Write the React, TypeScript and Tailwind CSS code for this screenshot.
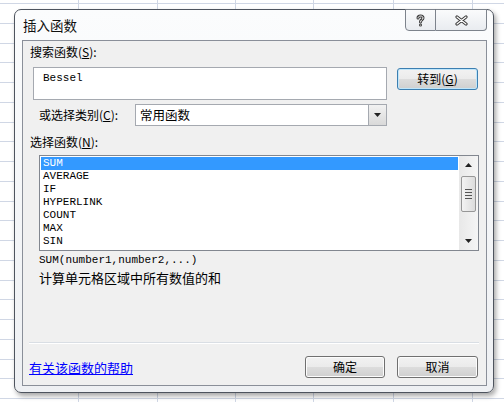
import type { ReactNode } from "react";

const functions = ["SUM", "AVERAGE", "IF", "HYPERLINK", "COUNT", "MAX", "SIN"];

function SheetGrid() {
    const rows = Array.from({ length: 21 }, (_, i) => Math.round(3 + i * 19.75) + 0.5);
    const cols = [78, 157, 235, 313, 393, 472];
    return (
        <svg className="absolute inset-0" width="504" height="402">
            {rows.map((y) => (
                <line key={`r${y}`} x1="0" x2="504" y1={y} y2={y} stroke="#d0d7e5" />
            ))}
            {cols.map((x) => (
                <line key={`c${x}`} x1={x + 0.5} x2={x + 0.5} y1="0" y2="402" stroke="#d0d7e5" />
            ))}
        </svg>
    );
}

function WinButton({
    children,
    className,
}: {
    children: ReactNode;
    className: string;
}) {
    return (
        <div
            className={`flex items-center justify-center rounded-[3px] border bg-[linear-gradient(to_bottom,#f2f2f2_0%,#ebebeb_50%,#dddddd_50%,#cfcfcf_100%)] text-[12px] text-black ${className}`}
        >
            {children}
        </div>
    );
}

function Triangle({ up }: { up?: boolean }) {
    return (
        <svg width="7" height="4" viewBox="0 0 7 4">
            <polygon points={up ? "3.5,0 7,4 0,4" : "0,0 7,0 3.5,4"} fill="#222" />
        </svg>
    );
}

export default function App() {
    return (
        <div className="relative h-[402px] w-[504px] overflow-hidden bg-white pl-[14px] pt-[9px] font-['Noto_Sans_CJK_SC',sans-serif]">
            <SheetGrid />

            {/* Dialog frame */}
            <div className="relative flex h-[384px] w-[480px] flex-col rounded-[7px] border border-[#4e545e] bg-[linear-gradient(to_bottom,#fbfcfd,#eef0f3)] shadow-[2px_3px_5px_rgba(0,0,0,0.35)]">
                {/* Title bar */}
                <div className="flex h-[30px] items-start justify-between pl-[8px] pr-[6px]">
                    <div className="pt-[7px] text-[13.5px] leading-[16px] text-[#111] [text-shadow:0_0_6px_#fff]">
                        插入函数
                    </div>
                    <div className="-mt-px flex h-[22px]">
                        <div className="flex w-[31px] items-center justify-center rounded-bl-[4px] border border-[#7d838c] bg-[linear-gradient(to_bottom,#fafbfc,#e9ecf0)]">
                            <svg width="9" height="13" viewBox="0 0 9 13">
                                <path d="M2 4 C2 1.3 7 1.3 7 4 C7 5.8 4.5 5.8 4.5 8" fill="none" stroke="#3a3a3a" strokeWidth="3" strokeLinecap="round" />
                                <circle cx="4.5" cy="11" r="1.5" fill="#3a3a3a" />
                                <path d="M2 4 C2 1.3 7 1.3 7 4 C7 5.8 4.5 5.8 4.5 8" fill="none" stroke="#fff" strokeWidth="1" strokeLinecap="round" />
                                <circle cx="4.5" cy="11" r="0.5" fill="#fff" />
                            </svg>
                        </div>
                        <div className="flex w-[51px] items-center justify-center rounded-br-[4px] border border-l-0 border-[#7d838c] bg-[linear-gradient(to_bottom,#fafbfc,#e9ecf0)]">
                            <svg width="13" height="11" viewBox="0 0 13 11">
                                <path d="M2 2 L11 9 M11 2 L2 9" stroke="#3a3a3a" strokeWidth="3.2" strokeLinecap="round" />
                                <path d="M2 2 L11 9 M11 2 L2 9" stroke="#fff" strokeWidth="1.2" strokeLinecap="round" />
                            </svg>
                        </div>
                    </div>
                </div>

                {/* Client area */}
                <div className="ml-[7px] h-[346px] w-[465px] border border-[#8a8f99] bg-[#f0f0f0] text-[12px] leading-[16px] text-black">
                    <div className="ml-[7px] mt-[3px] h-[16px]">
                        搜索函数(<span className="underline">S</span>):
                    </div>

                    <div className="ml-[10px] mt-[7px] flex items-start gap-[10px]">
                        <div className="h-[33px] w-[354px] border border-[#a5a9b0] bg-white px-[9px] pt-[4px] font-['Liberation_Mono',monospace] text-[11px] leading-[13px]">
                            Bessel
                        </div>
                        <WinButton className="mt-[1px] h-[22px] w-[81px] border-[#3c7fb1] shadow-[inset_0_0_0_1px_#bfe6fb]">
                            转到(<span className="underline">G</span>)
                        </WinButton>
                    </div>

                    <div className="mt-[4px] flex items-center">
                        <div className="ml-[16px] w-[96px]">
                            或选择类别(<span className="underline">C</span>):
                        </div>
                        <div className="flex h-[22px] w-[252px] border border-[#a5a9b0] bg-white">
                            <div className="flex-1 pl-[4px] text-[12.5px] leading-[20px]">常用函数</div>
                            <div className="flex w-[18px] items-center justify-center border-l border-[#a5a9b0] bg-[linear-gradient(to_bottom,#f2f2f2,#d9d9d9)]">
                                <Triangle />
                            </div>
                        </div>
                    </div>

                    <div className="ml-[7px] mt-[8px] h-[16px]">
                        选择函数(<span className="underline">N</span>):
                    </div>

                    {/* Function list */}
                    <div className="ml-[16px] mt-[5px] flex h-[96px] w-[440px] border border-[#828790] bg-white">
                        <div className="flex-1 p-[1px] font-['Liberation_Mono',monospace] text-[11px] leading-[13px]">
                            {functions.map((fn, idx) => (
                                <div
                                    key={fn}
                                    className={
                                        idx === 0
                                            ? "h-[13px] bg-[#3399ff] pl-[2px] text-white"
                                            : "h-[13px] pl-[2px] text-black"
                                    }
                                >
                                    {fn}
                                </div>
                            ))}
                        </div>
                        <div className="flex w-[19px] flex-col items-center bg-[linear-gradient(to_right,#e8e8e8,#f5f5f5)]">
                            <div className="flex h-[18px] items-center justify-center">
                                <Triangle up />
                            </div>
                            <div className="mt-[2px] flex h-[36px] w-[15px] flex-col items-center justify-center gap-[2px] rounded-[2px] border border-[#979797] bg-[linear-gradient(to_right,#f3f3f3,#dcdcdc)]">
                                <div className="h-px w-[7px] bg-[#555]" />
                                <div className="h-px w-[7px] bg-[#555]" />
                                <div className="h-px w-[7px] bg-[#555]" />
                                <div className="h-px w-[7px] bg-[#555]" />
                            </div>
                            <div className="mt-auto flex h-[18px] items-center justify-center">
                                <Triangle />
                            </div>
                        </div>
                    </div>

                    <div className="ml-[16px] mt-[2px] h-[14px] font-['Liberation_Mono',monospace] text-[11px] leading-[14px]">
                        SUM(number1,number2,...)
                    </div>
                    <div className="ml-[16px] mt-[2px] h-[17px] text-[13px] leading-[17px]">
                        计算单元格区域中所有数值的和
                    </div>

                    <div className="ml-[6px] mt-[56px] w-[450px] border-t border-b border-t-[#d9dee4] border-b-white" />

                    <div className="ml-[6px] mt-[12px] flex items-center pr-[8px]">
                        <div className="flex-1 text-[13px] leading-[17px] text-[#0000ff] underline">
                            有关该函数的帮助
                        </div>
                        <WinButton className="h-[22px] w-[80px] border-[#707070] shadow-[inset_0_0_0_1px_#fcfcfc]">
                            确定
                        </WinButton>
                        <WinButton className="ml-[12px] h-[22px] w-[81px] border-[#707070] shadow-[inset_0_0_0_1px_#fcfcfc]">
                            取消
                        </WinButton>
                    </div>
                </div>
            </div>
        </div>
    );
}
